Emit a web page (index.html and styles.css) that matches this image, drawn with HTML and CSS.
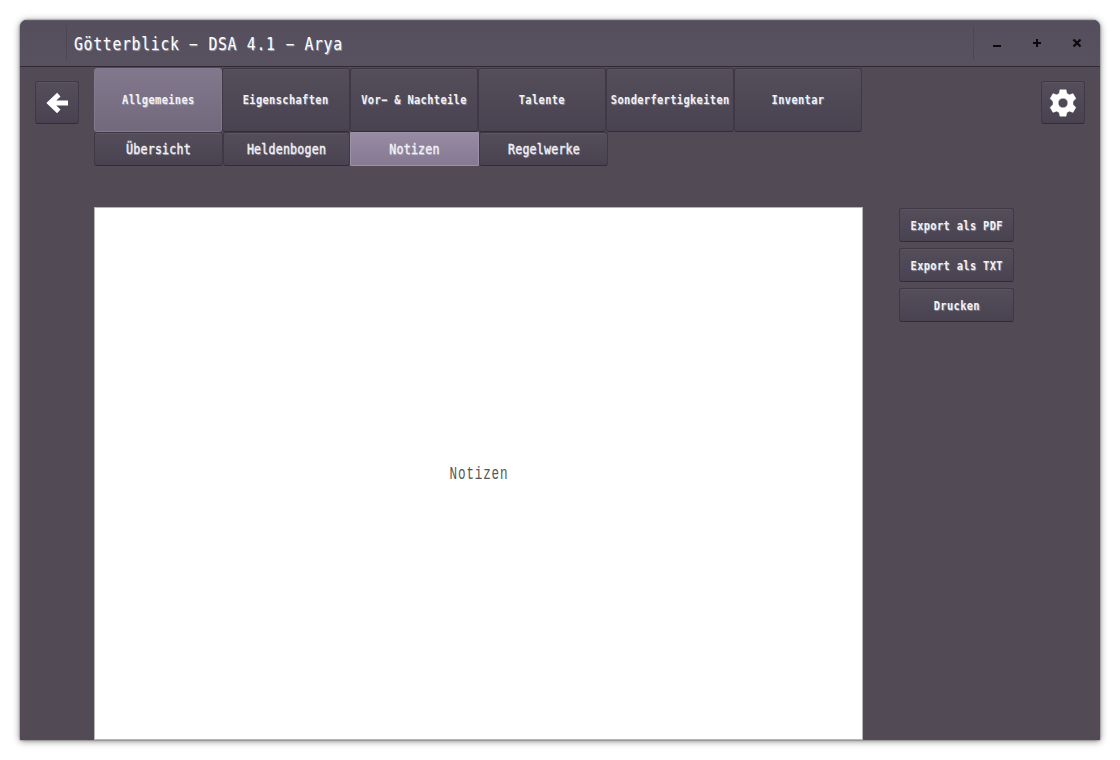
FILE: index.html
```html
<!DOCTYPE html>
<html lang="de">
<head>
<meta charset="utf-8">
<title>Götterblick</title>
<link rel="stylesheet" href="styles.css">
</head>
<body>
<div class="window">
  <header class="titlebar">
    <div class="app-icon"></div>
    <h1 class="title"><span>Götterblick <i class="dash">–</i> DSA 4.1 <i class="dash">–</i> Arya</span></h1>
    <div class="controls">
      <svg viewBox="0 0 40 46"><path d="M19 25h8v2h-8z"/></svg>
      <svg viewBox="0 0 40 46"><path d="M19 22h3v-3h2v3h3v2h-3v3h-2v-3h-3z"/></svg>
      <svg viewBox="0 0 40 46"><path d="M19.5 19.5l7 7m0-7l-7 7" stroke="#0c0a0d" stroke-width="2.2"/></svg>
    </div>
  </header>
  <div class="body">
    <button class="btn square back" aria-label="Zurück"><svg viewBox="0 0 44 44"><path d="M33 22H16M23.8 13.6L15 22l8.8 8.4" fill="none" stroke="#fff" stroke-width="5"/></svg></button>
    <main>
      <nav class="tabs">
        <button class="btn active"><span>Allgemeines</span></button>
        <button class="btn"><span>Eigenschaften</span></button>
        <button class="btn"><span>Vor<i class="dash">–</i> &amp; Nachteile</span></button>
        <button class="btn"><span>Talente</span></button>
        <button class="btn"><span>Sonderfertigkeiten</span></button>
        <button class="btn"><span>Inventar</span></button>
      </nav>
      <nav class="subtabs">
        <button class="btn"><span>Übersicht</span></button>
        <button class="btn"><span>Heldenbogen</span></button>
        <button class="btn active"><span>Notizen</span></button>
        <button class="btn"><span>Regelwerke</span></button>
      </nav>
      <section class="page"><span>Notizen</span></section>
    </main>
    <aside class="actions">
      <button class="btn"><span>Export als PDF</span></button>
      <button class="btn"><span>Export als TXT</span></button>
      <button class="btn"><span>Drucken</span></button>
    </aside>
    <button class="btn square gear" aria-label="Einstellungen"><svg viewBox="-22 -22 44 44"><path fill="#fff" fill-rule="evenodd" d="M-3.1-13.3H3.1L3.9-9.6 6.4-8.2 10-9.4 12.9-4.4 10-1.6V1.6L12.9 4.4 10 9.4 6.4 8.2 3.9 9.6 3.1 13.3H-3.1L-3.9 9.6-6.4 8.2-10 9.4-12.9 4.4-10 1.6V-1.6L-12.9-4.4-10-9.4-6.4-8.2-3.9-9.6ZM0-4.8A4.8 4.8 0 1 0 0 4.8 4.8 4.8 0 1 0 0-4.8Z" stroke="#fff" stroke-width=".4" stroke-linejoin="round"/></svg></button>
  </div>
</div>
</body>
</html>
```
FILE: styles.css
```css
* { box-sizing: border-box; }
body {
  margin: 0;
  padding: 20px;
  height: 760px;
  overflow: hidden;
  background: #fff;
  font-family: "DejaVu Sans Mono", monospace;
}
.window {
  width: 1080px;
  height: 720px;
  display: flex;
  flex-direction: column;
  overflow: hidden;
  border-radius: 7px 7px 0 0;
  background: #524b56;
  box-shadow: 0 0 2px rgba(0,0,0,.6), 0 1px 7px rgba(0,0,0,.5);
}
.titlebar {
  flex: none;
  height: 47px;
  display: flex;
  align-items: center;
  background: linear-gradient(#554e5c, #585160);
  border-bottom: 1px solid #2e2932;
  box-shadow: inset 0 1px #625b69;
}
.app-icon {
  width: 47px;
  height: 34px;
  border-right: 1px solid #4c4552;
}
.title {
  flex: 1;
  margin: 0;
  padding: 1px 0 0 7px;
  font-size: 18px;
  font-weight: 400;
  color: #fff;
  text-shadow: 1px 1px 1px rgba(220,220,230,.6);
  white-space: nowrap;
}
.title span {
  display: inline-block;
  transform: scaleX(.82);
  transform-origin: left center;
  letter-spacing: .87px;
}
.dash {
  display: inline-block;
  font-style: normal;
  transform: scaleX(.85);
}
.controls {
  width: 127px;
  height: 34px;
  display: flex;
  align-items: center;
  border-left: 1px solid #4c4552;
}
.controls svg {
  width: 40px;
  height: 46px;
  flex: none;
  fill: #0c0a0d;
}
.body {
  flex: 1;
  min-height: 0;
  display: flex;
  align-items: flex-start;
  padding-left: 15px;
}
.btn {
  display: flex;
  align-items: center;
  justify-content: center;
  min-width: 0;
  padding: 0;
  border: 1px solid #403945;
  border-bottom-color: #312b35;
  border-radius: 3px;
  background: linear-gradient(#544d5a, #494250);
  box-shadow: inset 0 1px #5b5461;
  font: 700 13px "DejaVu Sans Mono", monospace;
  color: #f3f1f4;
  white-space: nowrap;
}
.btn span {
  flex: none;
  transform: scaleX(.8);
  letter-spacing: .42px;
  text-shadow: 1px 1px 1px rgba(220,220,230,.45);
}
.square {
  flex: none;
  width: 44px;
  height: 43px;
  margin-top: 14px;
}
.square svg {
  flex: none;
  width: 44px;
  height: 44px;
}
main {
  flex: none;
  width: 769px;
  height: 100%;
  margin-left: 15px;
  padding-top: 1px;
  display: flex;
  flex-direction: column;
}
.tabs {
  flex: none;
  height: 64px;
  display: flex;
}
.tabs .btn {
  width: 128px;
  padding-bottom: 2px;
}
.tabs .active {
  border-color: #837a8e;
  background: linear-gradient(#82788d, #72697c);
  box-shadow: none;
}
.subtabs {
  flex: none;
  height: 34px;
  display: grid;
  grid-template-columns: 129px 127px 129px 129px;
}
.subtabs .btn {
  font-size: 14.5px;
  font-weight: 400;
}
.subtabs .btn span {
  letter-spacing: .27px;
  -webkit-text-stroke: .4px #f3f1f4;
}
.subtabs .active {
  border-color: #9d93a9;
  border-radius: 1px;
  background: linear-gradient(#968ba4, #857a91);
  box-shadow: none;
}
.page {
  flex: 1;
  margin-top: 41px;
  padding-left: 1px;
  display: flex;
  align-items: center;
  justify-content: center;
  border: 1px solid #b5b5b5;
  background: #fff;
  color: #555;
  font: 18px "Liberation Mono", monospace;
}
.page span {
  transform: scaleX(.7);
  letter-spacing: 1.2px;
}
.actions {
  flex: none;
  width: 115px;
  margin: 141px 0 0 36px;
  display: grid;
  grid-template-columns: 115px;
  gap: 6px;
}
.actions .btn { height: 34px; }
.gear { margin-left: 27px; }
```
